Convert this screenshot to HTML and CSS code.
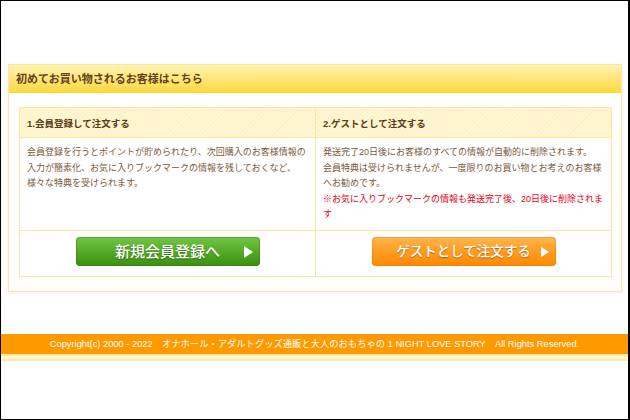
FILE: index.html
```html
<!DOCTYPE html>
<html lang="ja">
<head>
    <meta charset="UTF-8">
    <meta name="viewport" content="width=device-width, initial-scale=1.0">
    <title>初めてお買い物されるお客様はこちら</title>
    <link rel="stylesheet" href="styles.css">
</head>
<body>

    <div class="page">
        <div class="guide">
            <h2 class="guide-title">初めてお買い物されるお客様はこちら</h2>
            <div class="guide-body">
                <table class="guide-table">
                    <tr>
                        <th>1.会員登録して注文する</th>
                        <th>2.ゲストとして注文する</th>
                    </tr>
                    <tr>
                        <td class="desc">
                            会員登録を行うとポイントが貯められたり、次回購入のお客様情報の<br>
                            入力が簡素化、お気に入りブックマークの情報を残しておくなど、<br>
                            様々な特典を受けられます。
                        </td>
                        <td class="desc">
                            発送完了20日後にお客様のすべての情報が自動的に削除されます。<br>
                            会員特典は受けられませんが、一度限りのお買い物とお考えのお客様<br>
                            へお勧めです。<br>
                            <span class="notice">※お気に入りブックマークの情報も発送完了後、20日後に削除されま<br>す</span>
                        </td>
                    </tr>
                    <tr>
                        <td class="action">
                            <a href="#" class="btn btn-green">新規会員登録へ</a>
                        </td>
                        <td class="action">
                            <a href="#" class="btn btn-orange">ゲストとして注文する</a>
                        </td>
                    </tr>
                </table>
            </div>
        </div>

        <div class="footer">
            <p class="copyright">Copyright(c) 2000 - 2022　オナホール・アダルトグッズ通販と大人のおもちゃの 1 NIGHT LOVE STORY　All Rights Reserved.</p>
        </div>
    </div>

</body>
</html>
```

FILE: styles.css
```css
body {
    margin: 0;
    font-family: "Liberation Sans", "Noto Sans CJK JP", sans-serif;
    background: #fff;
}
.page {
    width: 630px;
    height: 420px;
    box-sizing: border-box;
    border: 1px solid #000;
    border-right-width: 2px;
    padding-top: 63px;
    overflow: hidden;
}
.guide {
    margin: 0 6px 0 7px;
    border: 1px solid #fde6a2;
    background: #fff;
    box-shadow: 0 1px 3px rgba(0, 0, 0, 0.08);
}
.guide-title {
    margin: 0;
    height: 28px;
    line-height: 28px;
    padding-left: 7px;
    font-size: 11px;
    font-weight: bold;
    color: #5e4418;
    background: linear-gradient(#fff4b0, #ffe680 45%, #ffd838);
}
.guide-body {
    padding: 14px 9px 14px 10px;
}
.guide-table {
    width: 100%;
    border-collapse: collapse;
    table-layout: fixed;
}
.guide-table th,
.guide-table td {
    border: 1px solid #fde4a0;
}
.guide-table th {
    height: 29px;
    padding: 0 7px;
    text-align: left;
    font-size: 9.5px;
    font-weight: bold;
    color: #5a3e1a;
    background: repeating-linear-gradient(135deg, #fff8dc 0, #fff8dc 1.5px, #fef0c0 1.5px, #fef0c0 3px);
}
.desc {
    height: 78px;
    padding: 7px 6px 7px 7px;
    vertical-align: top;
    font-size: 9px;
    line-height: 15.5px;
    color: #7a5a38;
    white-space: nowrap;
}
.notice {
    color: #e60012;
}
.action {
    padding: 6px 0 10px;
    text-align: center;
}
.btn {
    position: relative;
    display: inline-block;
    width: 184px;
    height: 29px;
    line-height: 29px;
    border-radius: 4px;
    color: #fff;
    font-weight: 500;
    text-decoration: none;
    text-shadow: 0 1px 1px rgba(0, 0, 0, 0.35);
    vertical-align: top;
}
.btn::after {
    content: "";
    position: absolute;
    top: 50%;
    right: 7px;
    margin-top: -6px;
    border-left: 9px solid #fff;
    border-top: 6px solid transparent;
    border-bottom: 6px solid transparent;
}
.btn-green {
    font-size: 15px;
    background: linear-gradient(#72c646, #52a823 55%, #3a8f12);
    box-shadow: inset 0 0 0 1px rgba(40, 110, 10, 0.35);
}
.btn-orange {
    font-size: 13.5px;
    background: linear-gradient(#ffb650, #ff9a1e 55%, #ff8800);
    box-shadow: inset 0 0 0 1px rgba(220, 110, 0, 0.3);
}
.btn-orange::after {
    margin-top: -5px;
    border-left-width: 8px;
    border-top-width: 5px;
    border-bottom-width: 5px;
}
.footer {
    margin-top: 42px;
    border-bottom: 2px solid #f9eda4;
    box-shadow: 0 3px 0 #fdf7d2, 0 5px 0 #f8eca2;
}
.copyright {
    margin: 0;
    height: 20px;
    line-height: 20px;
    text-align: center;
    font-size: 9.3px;
    color: #fff;
    background: #ff9900;
}
```
